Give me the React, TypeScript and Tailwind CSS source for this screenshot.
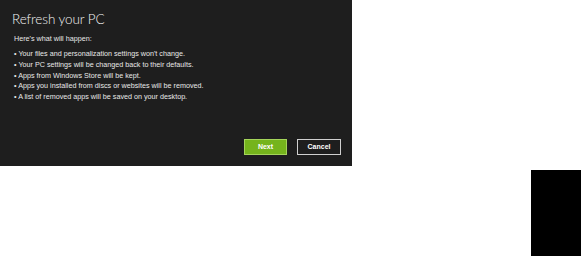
export default function App() {
  const items = [
    "Your files and personalization settings won't change.",
    "Your PC settings will be changed back to their defaults.",
    "Apps from Windows Store will be kept.",
    "Apps you installed from discs or websites will be removed.",
    "A list of removed apps will be saved on your desktop.",
  ];

  return (
    <div className="relative h-[256px] w-[581px] overflow-hidden bg-white font-['Liberation_Sans',sans-serif]">
      <div className="flex h-[166px] w-[352px] flex-col bg-[#1e1e1e] pl-[12px] pr-[11px] pt-[10px] text-white">
        <h1 className="text-[13.5px] leading-[18px] font-light tracking-[-0.1px] text-[#f2f2f2] font-['Lato',sans-serif]">
          Refresh your PC
        </h1>
        <p className="mt-[6px] pl-[2px] text-[7.2px] leading-[10px] text-[#e8e8e8]">Here's what will happen:</p>
        <ul className="mt-[5px] flex flex-col pl-[2px] text-[7.2px] leading-[10.8px] text-[#e8e8e8]">
          {items.map((t) => (
            <li key={t}>• {t}</li>
          ))}
        </ul>
        <div className="mt-auto mb-[11px] flex justify-end gap-[10px]">
          <button className="h-[16px] w-[43px] border border-[#a4d45a] bg-[#75b41c] text-[7px] font-bold text-white">
            Next
          </button>
          <button className="h-[16px] w-[44px] border border-[#d0d0d0] bg-[#1e1e1e] text-[7px] font-bold text-white">
            Cancel
          </button>
        </div>
      </div>
      <div className="absolute left-[531px] top-[170px] h-[86px] w-[50px] bg-black" />
    </div>
  );
}
